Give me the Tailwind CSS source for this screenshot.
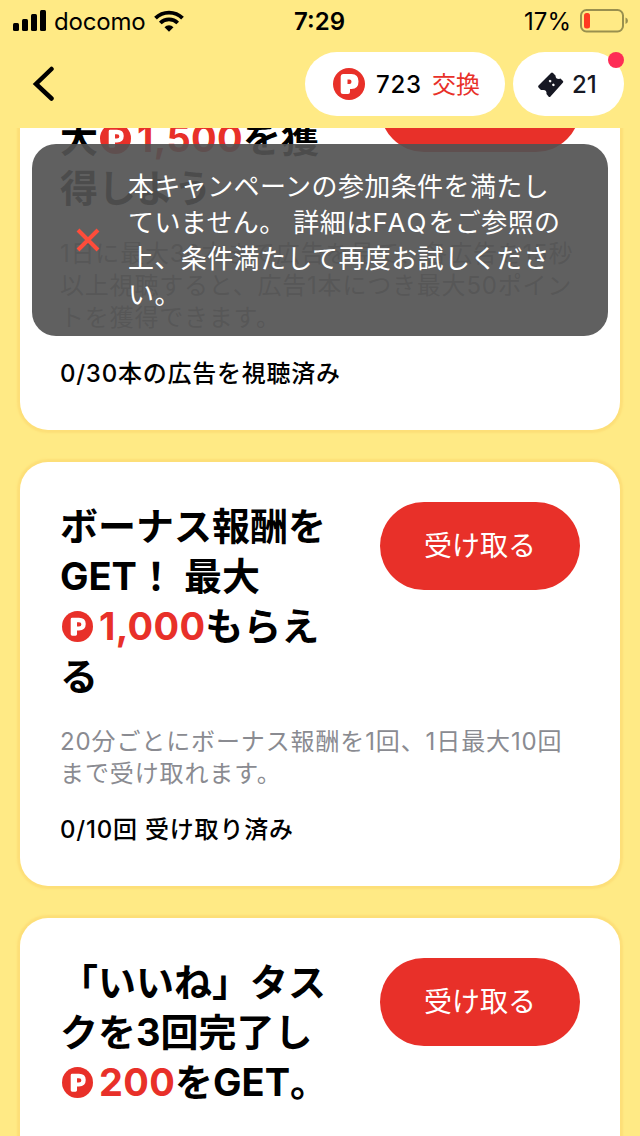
<!DOCTYPE html>
<html lang="ja">
  <head>
    <meta charset="UTF-8" />
    <meta name="viewport" content="width=device-width, initial-scale=1.0" />
    <title>ボーナス報酬</title>
    <script src="https://cdn.jsdelivr.net/npm/@tailwindcss/browser@4"></script>
    <style>
      body {
        font-family: Inter, 'Noto Sans CJK JP', sans-serif;
      }
    </style>
  </head>
  <body class="relative flex h-[1136px] w-[640px] flex-col overflow-hidden bg-[#ffea85] text-black">
    <!-- P コインの共通シンボル -->
    <svg class="hidden">
      <symbol id="coin" viewBox="0 0 32 32">
        <circle cx="16" cy="16" r="16" fill="#e83029" />
        <path fill="#fff" fill-rule="evenodd" d="M9 8.500Q9 7 10.500 7H17.500Q24.500 7 24.500 13.500Q24.500 20 17.500 20H15.500V24Q15.500 25.500 14 25.500H10.500Q9 25.500 9 24ZM15.500 11.500V16H17.500Q20 16 20 13.700Q20 11.500 17.500 11.500Z" />
      </symbol>
      <symbol id="coin-bold" viewBox="0 0 32 32">
        <circle cx="16" cy="16" r="16" fill="#e83029" />
        <path fill="#fff" fill-rule="evenodd" d="M7.700 8.500Q7.700 6 10 6H18.500Q25.500 6 25.500 13.500Q25.500 21 18.500 21H17V24Q17 26 15 26H10Q7.700 26 7.700 24ZM14.500 11.500V16H16.500Q18.500 16 18.500 13.700Q18.500 11.500 16.500 11.500Z" />
      </symbol>
    </svg>

    <!-- ステータスバー -->
    <div class="grid h-10 shrink-0 grid-cols-3 items-center pl-[13px] pr-3 text-2xl leading-10">
      <div class="flex items-center">
        <svg class="h-[22px] w-[33px]" viewBox="0 0 33 22">
          <rect x="0" y="13" width="6" height="8" rx="1.500" />
          <rect x="9" y="9" width="6" height="12" rx="1.500" />
          <rect x="18" y="4" width="6" height="17" rx="1.500" />
          <rect x="27" y="0" width="6" height="21" rx="1.500" />
        </svg>
        <span class="ml-2 pt-0.5 tracking-[-0.2px]">docomo</span>
        <svg class="ml-[9px] h-[22px] w-[30px]" viewBox="0 0 30 22" fill="none" stroke="#000" stroke-width="3.800">
          <path d="M1.500 8.200A19 19 0 0 1 28.500 8.200" />
          <path d="M6.300 13A12.300 12.300 0 0 1 23.700 13" />
          <path d="M10.500 17.200A6.400 6.400 0 0 1 19.500 17.200L15 21.800Z" fill="#000" stroke="none" />
        </svg>
      </div>
      <div class="pt-0.5 pr-0.5 text-center font-semibold">7:29</div>
      <div class="flex items-center justify-end">
        <span class="pt-0.5">17%</span>
        <svg class="ml-2 h-6 w-[49px]" viewBox="0 0 49 24">
          <rect x="2" y="1" width="42" height="21.500" rx="5.500" fill="none" stroke="#99904f" stroke-width="2" />
          <rect x="5" y="4" width="6" height="15.500" rx="2.500" fill="#ff3b21" />
          <path d="M46.500 8.500Q49 9.500 49 11.800T46.500 15Z" fill="#99904f" />
        </svg>
      </div>
    </div>

    <!-- ヘッダー -->
    <header class="flex h-[88px] shrink-0 items-center pl-8 pr-4">
      <svg class="h-9 w-6" viewBox="0 0 24 36" fill="none" stroke="#000" stroke-width="4.500" stroke-linecap="round">
        <path d="M19.500 3L4 18L19.500 32.500" />
      </svg>
      <div class="ml-auto flex h-16 w-[200px] items-center rounded-full bg-white pl-7 text-2xl font-medium">
        <svg class="size-8"><use href="#coin-bold" /></svg>
        <span class="ml-[11px] pt-px tracking-[0.8px]">723</span>
        <span class="ml-2.5 pt-px font-normal text-[#e83029]">交換</span>
      </div>
      <div class="relative ml-2 flex h-16 w-[111px] items-center rounded-full bg-white pl-6 text-2xl font-medium text-[#161823]">
        <svg class="h-7 w-7" viewBox="0 0 28 28" fill="#161823">
          <path d="M1.500 15.500L14 3Q15 2 16 3L18.500 5.500Q18.500 9 22 9L23.500 8.500L26 11Q26.500 11.600 26 12.500L13.500 26.500Q12.500 27.500 11.500 26.500L9.500 24Q10 19.500 5.500 20L4 20L1.500 17.500Q0.700 16.500 1.500 15.500Z" />
          <path d="M13 11L13.200 11.200M16.300 14.800L16.500 15" stroke="#fff" stroke-width="2.400" stroke-linecap="round" />
        </svg>
        <span class="ml-[7px] pt-px">21</span>
        <span class="absolute right-0 top-0 size-4 rounded-full bg-[#fe2c55]"></span>
      </div>
    </header>

    <!-- ミッション一覧 -->
    <main class="min-h-0 flex-1 overflow-hidden">
      <div class="-mt-[104px] flex flex-col gap-8 px-5">
        <section class="rounded-[28px] bg-white p-10 shadow-[0_0_2px_3px_#fddf78]">
          <div class="flex items-start justify-between">
            <h2 class="-mt-px mb-px pt-[50px] text-[38px] leading-[50px] font-bold whitespace-nowrap">
              大<svg class="mr-1.5 mb-[7px] ml-0.5 inline size-[31px]"><use href="#coin" /></svg><span class="tracking-[0.3px] text-[#e83029]">1,500</span>を獲<br />得しよう
            </h2>
            <button class="h-[88px] w-[200px] rounded-full bg-[#e83029] text-[28px] text-white">受け取る</button>
          </div>
          <p class="mt-6 text-2xl leading-8 tracking-[0.8px] whitespace-nowrap text-[#8a8b91]">1日に最大30本まで広告を見て、各広告を15秒<br />以上視聴すると、広告1本につき最大50ポイン<br />トを獲得できます。</p>
          <p class="mt-6 text-2xl leading-8 font-medium tracking-[0.75px]">0/30本の広告を視聴済み</p>
        </section>

        <section class="rounded-[28px] bg-white p-10 shadow-[0_0_2px_3px_#fddf78]">
          <div class="flex items-start justify-between">
            <h2 class="-mt-px mb-px text-[38px] leading-[50px] font-bold whitespace-nowrap">
              ボーナス報酬を<br />GET！ 最大<br /><svg class="mr-1.5 mb-[7px] ml-0.5 inline size-[31px]"><use href="#coin" /></svg><span class="tracking-[0.3px] text-[#e83029]">1,000</span>もらえ<br />る
            </h2>
            <button class="h-[88px] w-[200px] rounded-full bg-[#e83029] text-[28px] text-white">受け取る</button>
          </div>
          <p class="mt-6 text-2xl leading-8 tracking-[0.88px] whitespace-nowrap text-[#8a8b91]">20分ごとにボーナス報酬を1回、1日最大10回<br />まで受け取れます。</p>
          <p class="mt-6 text-2xl leading-8 font-medium tracking-[0.8px]">0/10回 受け取り済み</p>
        </section>

        <section class="rounded-[28px] bg-white p-10 shadow-[0_0_2px_3px_#fddf78]">
          <div class="flex items-start justify-between">
            <h2 class="-mt-px mb-px text-[38px] leading-[50px] font-bold whitespace-nowrap">
              「いいね」タス<br />クを3回完了し<br /><svg class="mr-1.5 mb-[7px] ml-0.5 inline size-[31px]"><use href="#coin" /></svg><span class="tracking-[0.3px] text-[#e83029]">200</span>をGET。
            </h2>
            <button class="h-[88px] w-[200px] rounded-full bg-[#e83029] text-[28px] text-white">受け取る</button>
          </div>
          <p class="mt-[25px] text-2xl leading-8 tracking-[0.8px] whitespace-nowrap text-[#8a8b91]">おすすめで「いいね」タスクを3回完了する</p>
        </section>
      </div>
    </main>

    <!-- トースト -->
    <div class="absolute left-8 top-36 flex h-48 w-[576px] items-center rounded-3xl bg-[#525252]/92 pl-11 text-white">
      <svg class="size-6 shrink-0" viewBox="0 0 24 24" fill="none" stroke="#ff4c3a" stroke-width="4">
        <path d="M2 2L22 22M22 2L2 22" />
      </svg>
      <p class="ml-[28px] pt-0.5 text-[26px] leading-9 tracking-[0.4px] whitespace-nowrap">本キャンペーンの参加条件を満たし<br />ていません。 詳細は<span class="tracking-[2px]">FAQ</span>をご参照の<br />上、条件満たして再度お試しくださ<br />い。</p>
    </div>
  </body>
</html>
